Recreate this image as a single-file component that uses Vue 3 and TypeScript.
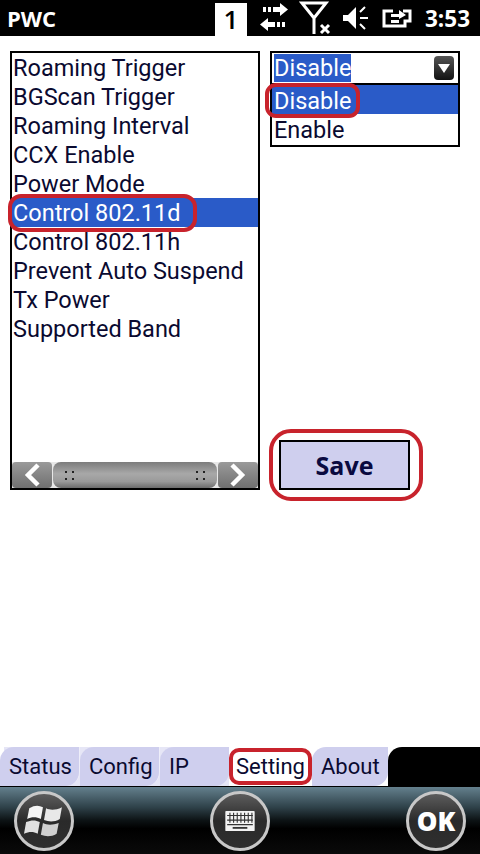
<script setup lang="ts">
const options = [
  'Roaming Trigger',
  'BGScan Trigger',
  'Roaming Interval',
  'CCX Enable',
  'Power Mode',
  'Control 802.11d',
  'Control 802.11h',
  'Prevent Auto Suspend',
  'Tx Power',
  'Supported Band'
]
const selected = 'Control 802.11d'
const tabs = ['Status', 'Config', 'IP', 'Setting', 'About']
</script>

<template>
  <div class="screen">
    <header class="status">
      <span class="title">PWC</span>
      <span class="badge">1</span>
      <svg class="ico arrows" width="30" height="32" viewBox="0 0 30 32" fill="#fff">
        <path d="M14 5h7V1l8 6.5-8 6.5v-4h-7zM16 25H9v4l-8-6.5L9 16v4h7z" />
        <path d="M4 5h3v5H4zM9 5h3v5H9zM18 20h3v5h-3zM23 20h3v5h-3z" />
      </svg>
      <svg class="ico" width="32" height="34" viewBox="0 0 32 34" fill="none" stroke="#fff">
        <path d="M3 2h24L15 17zM15 17v16" stroke-width="3" />
        <path d="M22 24l8 8M30 24l-8 8" stroke-width="3" />
      </svg>
      <svg class="ico" width="26" height="28" viewBox="0 0 26 28">
        <path d="M0 11h5l8-8v22l-8-8H0z" fill="#fff" />
        <path d="M17 8l5-5M17 14h8M17 20l5 5" stroke="#fff" stroke-width="2" fill="none" />
      </svg>
      <svg class="ico" width="32" height="24" viewBox="0 0 32 24" fill="none">
        <path d="M12 5H3v15h21v-5h5V5h-7" stroke="#fff" stroke-width="3" />
        <path d="M10 8h8V4l7 5-7 4v-2h-8zM10 14h8v3h-8z" fill="#fff" />
      </svg>
      <span class="clock">3:53</span>
    </header>

    <main class="content">
      <section class="list-box">
        <ul class="list">
          <li v-for="opt in options" :key="opt" class="row" :class="{ active: opt === selected }">
            {{ opt }}
            <span v-if="opt === selected" class="ring ring-list"></span>
          </li>
        </ul>
        <div class="scroller">
          <button class="arrow">
            <svg width="26" height="26" viewBox="0 0 26 26" fill="none">
              <path d="M19 3l-10 10 10 10" stroke="#fff" stroke-width="4.5" />
            </svg>
          </button>
          <div class="thumb">
            <span class="grip"><i></i><i></i><i></i><i></i></span>
            <span class="grip"><i></i><i></i><i></i><i></i></span>
          </div>
          <button class="arrow">
            <svg width="26" height="26" viewBox="0 0 26 26" fill="none">
              <path d="M7 3l10 10-10 10" stroke="#fff" stroke-width="4.5" />
            </svg>
          </button>
        </div>
      </section>

      <section class="side">
        <div class="combo">
          <div class="combo-head">
            <span class="combo-value">Disable</span>
            <span class="combo-btn"><i class="tri"></i></span>
          </div>
          <div class="combo-opt active">
            Disable
            <span class="ring ring-opt"></span>
          </div>
          <div class="combo-opt">Enable</div>
        </div>
        <div class="save-wrap">
          <button class="save">Save</button>
          <span class="ring ring-save"></span>
        </div>
      </section>
    </main>

    <nav class="tabs">
      <span v-for="t in tabs" :key="t" class="tab" :class="['tab-' + t.toLowerCase(), { current: t === 'Setting' }]">
        {{ t }}
        <span v-if="t === 'Setting'" class="ring ring-tab"></span>
      </span>
      <span class="tabs-fill"></span>
    </nav>

    <footer class="bar">
      <button class="round">
        <svg width="40" height="40" viewBox="0 0 38 38">
          <path d="M5 7c5-3 9-3 13-1l-2 11c-4-2-9-2-13 0z" fill="#f4f4f4" />
          <path d="M21 7c4 2 9 2 15-1l-2 11c-5 3-10 3-15 1z" fill="#e8e8e8" />
          <path d="M2 20c5-2 9-2 13 0l-2 11c-4-2-8-2-13 0z" fill="#e0e0e0" />
          <path d="M18 21c4 2 9 2 15 0l-2 10c-5 3-10 3-15 1z" fill="#cfcfcf" />
        </svg>
      </button>
      <button class="round">
        <svg width="32" height="22" viewBox="0 0 34 24">
          <rect x="1" y="1" width="32" height="22" rx="1" fill="#f2f2f2" />
          <path d="M3 6h28M3 11h28M3 16h28" stroke="#333" stroke-width="1.2" />
          <path d="M6 3v11M10 3v11M14 3v11M18 3v11M22 3v11M26 3v11M30 3v11" stroke="#333" stroke-width="1.2" />
          <path d="M9 19.5h16" stroke="#333" stroke-width="2" />
        </svg>
      </button>
      <button class="round ok">OK</button>
    </footer>
  </div>
</template>

<style>
html,
body {
  margin: 0;
  background: #fff;
}
</style>

<style scoped>
.screen {
  width: 480px;
  height: 854px;
  display: flex;
  flex-direction: column;
  overflow: hidden;
  font-family: Roboto, "Open Sans", sans-serif;
  background: #fff;
}

/* status bar */
.status {
  height: 36px;
  background: #000;
  color: #fff;
  display: flex;
  align-items: center;
  gap: 12px;
  padding: 0 10px 0 7px;
  flex: none;
  font-family: "Open Sans", sans-serif;
}

.title {
  font-size: 22px;
  font-weight: 700;
  margin-right: auto;
}

.badge {
  width: 32px;
  height: 33px;
  margin-top: 3px;
  background: #fff;
  color: #000;
  font-size: 26px;
  font-weight: 600;
  line-height: 33px;
  text-align: center;
}

.ico {
  flex: none;
}

.arrows {
  margin-right: -2px;
}

.clock {
  font-size: 22.5px;
  font-weight: 700;
}

/* main */
.content {
  flex: 1;
  display: flex;
  gap: 10px;
  align-items: flex-start;
  padding: 15px 20px 0 10px;
}

.list-box {
  width: 250px;
  height: 439px;
  box-sizing: border-box;
  border: 2px solid #000;
  display: flex;
  flex-direction: column;
  flex: none;
}

.list {
  list-style: none;
  margin: 0;
  padding: 0;
  flex: 1;
  color: #0a0a30;
  font-size: 23.5px;
}

.row {
  position: relative;
  height: 29px;
  line-height: 31px;
  padding-left: 1px;
  white-space: nowrap;
}

.row.active {
  background: #2a5bc8;
  color: #fff;
}

.ring {
  position: absolute;
  box-sizing: border-box;
  border: 4px solid #c8232c;
  pointer-events: none;
}

.ring-list {
  left: -4px;
  top: -4px;
  width: 189px;
  height: 38px;
  border-radius: 13px;
}

.scroller {
  height: 26px;
  display: flex;
  gap: 1px;
  background: #e8e8e8;
}

.arrow {
  width: 40px;
  border: 0;
  padding: 0;
  border-radius: 4px;
  background: linear-gradient(#9a9a9a, #707070);
  display: flex;
  align-items: center;
  justify-content: center;
}

.thumb {
  flex: 1;
  border-radius: 8px;
  background: linear-gradient(#7c7c7c, #a8a8a8 45%, #9a9a9a 75%, #6c6c6c);
  display: flex;
  align-items: center;
  justify-content: space-between;
  padding: 0 12px;
}

.grip {
  width: 9px;
  display: grid;
  grid-template-columns: 2px 2px;
  gap: 5px;
}

.grip i {
  width: 2px;
  height: 2px;
  background: #222;
}

.side {
  width: 190px;
  flex: none;
  display: flex;
  flex-direction: column;
}

.combo {
  box-sizing: border-box;
  height: 96px;
  border: 2px solid #000;
  font-size: 23.5px;
  color: #0a0a30;
}

.combo-head {
  height: 32px;
  box-sizing: border-box;
  border-bottom: 2px solid #000;
  display: flex;
  align-items: center;
  justify-content: space-between;
  padding: 0 3px 0 2px;
}

.combo-value {
  background: #2a5bc8;
  color: #fff;
  line-height: 28px;
}

.combo-btn {
  width: 20px;
  height: 24px;
  margin-right: 1px;
  border-radius: 4px;
  background: linear-gradient(#555, #111);
  display: flex;
  align-items: center;
  justify-content: center;
}

.tri {
  width: 0;
  height: 0;
  border-left: 6px solid transparent;
  border-right: 6px solid transparent;
  border-top: 9px solid #fff;
}

.combo-opt {
  position: relative;
  height: 29px;
  line-height: 32px;
  padding-left: 2px;
}

.combo-opt.active {
  background: #2a5bc8;
  color: #fff;
}

.ring-opt {
  left: -7px;
  top: -2px;
  width: 95px;
  height: 35px;
  border-radius: 11px;
}

.save-wrap {
  position: relative;
  margin-top: 293px;
  margin-left: 9px;
  width: 131px;
}

.save {
  width: 131px;
  height: 50px;
  display: block;
  border: 2px solid #000;
  background: #cfcfee;
  color: #0a0a40;
  font-family: "Open Sans", sans-serif;
  font-size: 25px;
  font-weight: 700;
}

.ring-save {
  left: -10px;
  top: -11px;
  width: 154px;
  height: 72px;
  border-radius: 22px;
}

/* tabs */
.tabs {
  height: 40px;
  flex: none;
  display: flex;
  align-items: stretch;
  font-size: 22px;
  color: #0a0a30;
  background: linear-gradient(90deg, #fff 0 4px, #e6e6f6 4px 229px, #fff 229px);
  border-bottom: 1px solid #000;
  box-sizing: border-box;
  margin-top: auto;
}

.tab {
  position: relative;
  box-sizing: border-box;
  width: 80px;
  line-height: 39px;
  padding-left: 9px;
  white-space: nowrap;
  background: #cfcfee;
  border-radius: 14px 0 14px 0;
  border-right: 1px solid #eeeef9;
}

.tab-ip {
  width: 69px;
  border-right: 0;
}

.tab-setting {
  width: 83px;
  padding-left: 7px;
  background: #fff;
  border-right: 0;
}

.tab-about {
  width: 76px;
  padding-left: 9px;
  border-right: 0;
}

.tabs-fill {
  flex: 1;
  background: #000;
  border-radius: 14px 0 0 0;
}

.ring-tab {
  left: 0;
  top: 1px;
  width: 83px;
  height: 37px;
  border-radius: 10px;
}

/* bottom bar */
.bar {
  height: 67px;
  flex: none;
  background: linear-gradient(#64808d, #2f424a 30%, #0c1214 50%, #000 62%, #0a0a0a);
  display: flex;
  align-items: center;
  justify-content: space-between;
  padding: 0 14px;
}

.round {
  width: 60px;
  height: 60px;
  box-sizing: border-box;
  border-radius: 50%;
  border: 3px solid #c8c8c8;
  background: linear-gradient(#5c5c5c, #2a2a2a 50%, #2f2f2f);
  padding: 0;
  display: flex;
  align-items: center;
  justify-content: center;
}

.ok {
  color: #fff;
  font-family: "Open Sans", sans-serif;
  font-size: 26px;
  font-weight: 800;
}
</style>
